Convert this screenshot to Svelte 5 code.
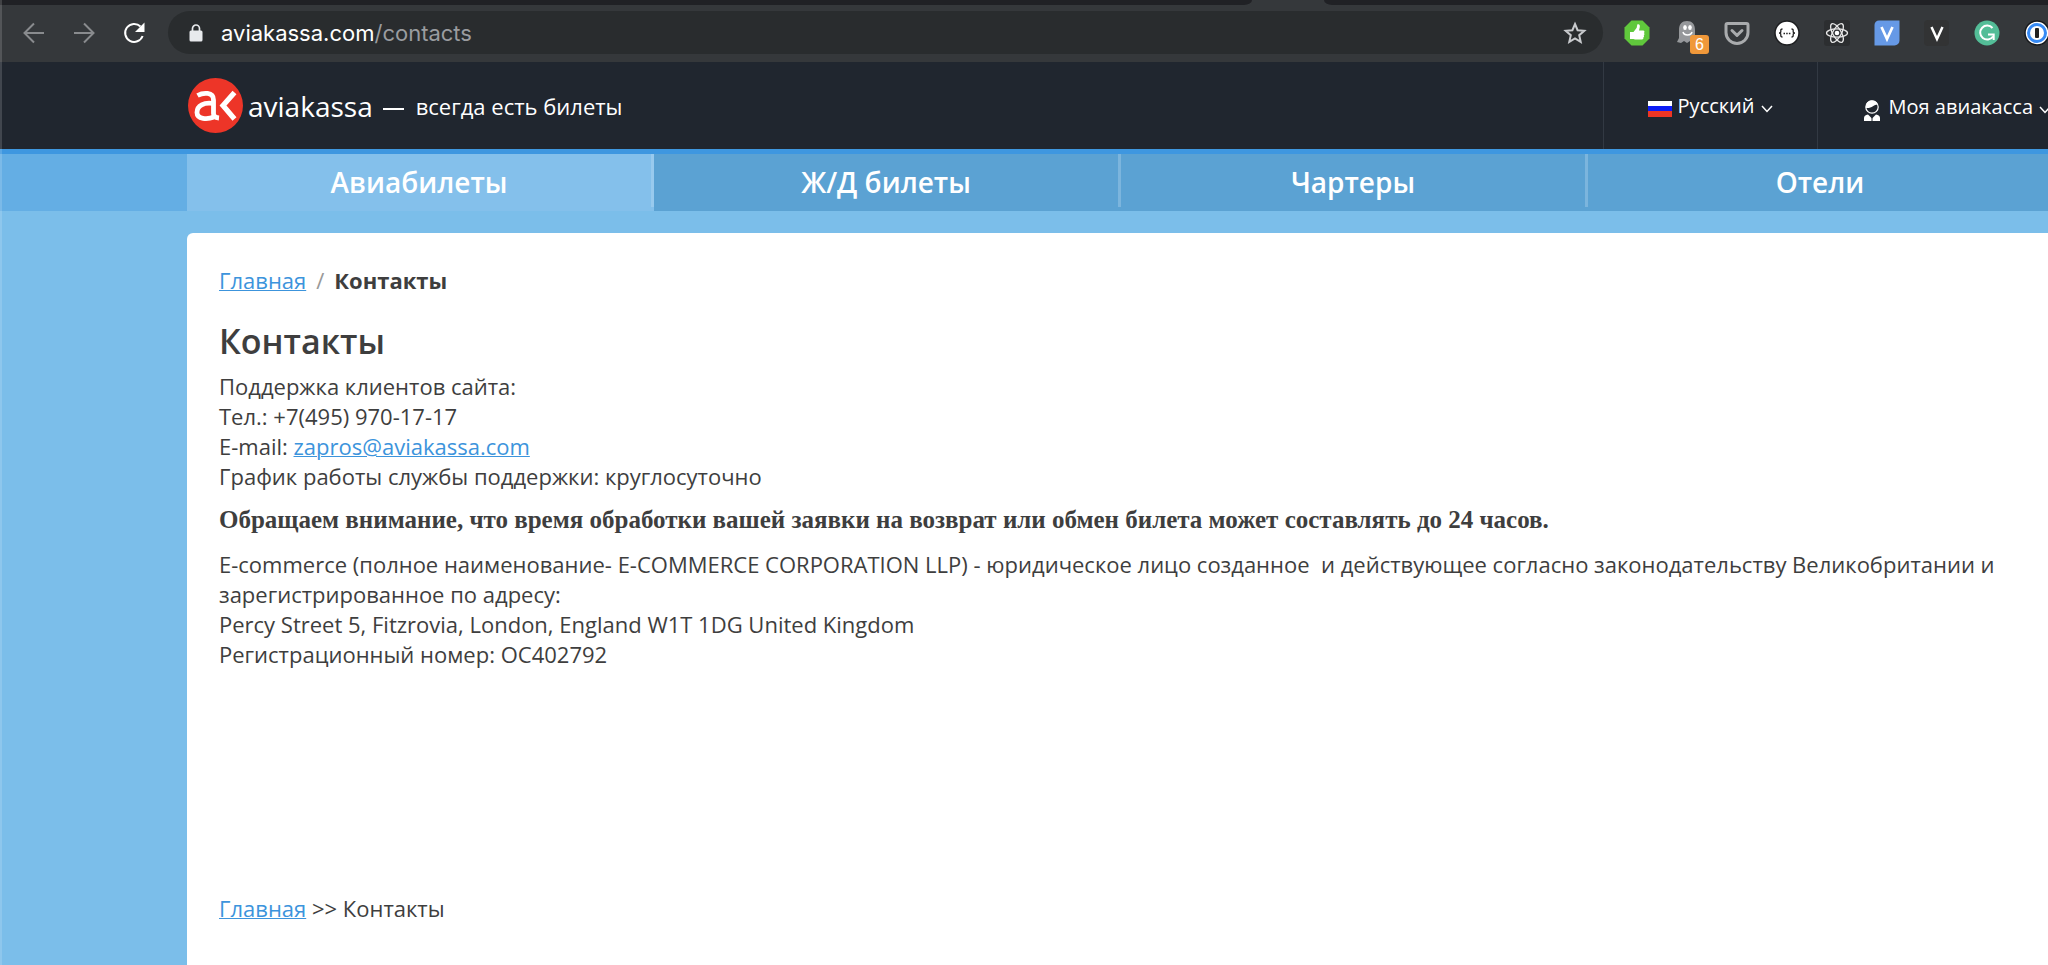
<script>
  const tabs = ['Авиабилеты', 'Ж/Д билеты', 'Чартеры', 'Отели'];
  const petals = [0, 60, 120];
</script>

<div class="page">
  <div class="tabstrip" aria-hidden="true">
    <span class="strip-left"></span>
    <span class="strip-right"></span>
  </div>

  <div class="toolbar">
    <div class="navigation">
      <button class="tool dim" aria-label="Back">
        <svg width="24" height="24" viewBox="0 0 24 24"><path d="M22 12H3M12 2.500 2.500 12 12 21.500" /></svg>
      </button>
      <button class="tool dim" aria-label="Forward">
        <svg width="24" height="24" viewBox="0 0 24 24"><path d="M2 12h19M12 2.500 21.500 12 12 21.500" /></svg>
      </button>
      <button class="tool bright" aria-label="Reload">
        <svg width="24" height="24" viewBox="0 0 24 24">
          <path d="M18.500 5.500A9 9 0 1 0 20.600 15" stroke-width="2.500" />
          <path class="solid" d="M22.500 1.500v9.500H13z" />
        </svg>
      </button>
    </div>

    <div class="omnibox">
      <svg class="lock" width="14" height="18" viewBox="0 0 14 18" aria-hidden="true">
        <rect x="0.500" y="6.500" width="13" height="11" rx="1.500" fill="#e8eaed" />
        <path d="M3.500 7V4.500a3.500 3.500 0 0 1 7 0V7" fill="none" stroke="#e8eaed" stroke-width="1.700" />
      </svg>
      <span class="url">aviakassa.com<span class="path">/contacts</span></span>
      <button class="tool star" aria-label="Bookmark">
        <svg width="24" height="24" viewBox="0 0 24 24">
          <path d="M12 3l2.600 6.200 6.700.6-5.100 4.400 1.500 6.600L12 17.300l-5.700 3.500 1.500-6.600-5.100-4.400 6.700-.6z" />
        </svg>
      </button>
    </div>

    <div class="extensions">
      <button class="tool" aria-label="Blocker">
        <svg width="26" height="26" viewBox="0 0 26 26">
          <path d="M7.500.500h11l7 7v11l-7 7h-11l-7-7v-11z" fill="#60c83c" />
          <path d="M6 12h3.500l3.200-4.300.6-3.200c1.800-.8 2.900.6 2.500 2.500L15 10.500h4c1.800 0 1.800 2 .8 2.500 1 .6.900 1.900-.1 2.300.7.700.5 1.900-.4 2.200.4.900-.1 2-1.300 2H11L9.500 19H6z" fill="#fff" />
        </svg>
      </button>
      <button class="tool ghost" aria-label="Ghost">
        <svg width="20" height="24" viewBox="0 0 20 24">
          <path d="M2 10C2 4 5 1 10 1s8 3 8 9v8l2 4-4 1-3-2-3 2-3-2-3 2-4-1 2-4z" fill="#96989b" />
          <ellipse cx="8" cy="7.500" rx="1.800" ry="2.500" fill="#fff" />
          <ellipse cx="13" cy="7.500" rx="1.800" ry="2.500" fill="#fff" />
          <path d="M6 12c1 4 8 4 9 0" fill="none" stroke="#fff" stroke-width="1.500" />
        </svg>
        <span class="badge">6</span>
      </button>
      <button class="tool" aria-label="Pocket">
        <svg width="26" height="26" viewBox="0 0 26 26" fill="none" stroke="#a9abad">
          <path d="M3.500 3.500h19q1.500 0 1.500 1.500v7.500a11 11 0 0 1-22 0V5q0-1.500 1.500-1.500z" stroke-width="3" />
          <path d="M8 10.500l5 4.800 5-4.800" stroke-width="3" stroke-linecap="round" stroke-linejoin="round" />
        </svg>
      </button>
      <button class="tool" aria-label="JSON">
        <svg width="26" height="26" viewBox="0 0 26 26">
          <circle cx="13" cy="13" r="12" fill="#fff" stroke="#1d1e20" stroke-width="1.500" />
          <path d="M8.500 9Q6.500 9 6.800 11T5 13q2 0 1.800 2t1.700 2M17.500 9q2 0 1.700 2t1.800 2q-2 0-1.800 2t-1.700 2" fill="none" stroke="#222" stroke-width="1.300" />
          <path d="M9.500 13.500h1.500m1.200 0h1.500m1.200 0h1.500" stroke="#222" stroke-width="1.500" />
        </svg>
      </button>
      <button class="tool" aria-label="React">
        <svg width="26" height="26" viewBox="0 0 26 26">
          <rect width="26" height="26" rx="3" fill="#2c2e30" />
          {#each petals as angle}
            <ellipse cx="13" cy="13" rx="10.500" ry="4.200" fill="none" stroke="#e6e6e6" stroke-width="1.300" transform="rotate({angle} 13 13)" />
          {/each}
          <circle cx="13" cy="13" r="2.300" fill="#fff" />
        </svg>
      </button>
      <button class="tool" aria-label="V blue">
        <svg width="26" height="26" viewBox="0 0 26 26">
          <path d="M5 .500h20.500v20a5 5 0 0 1-5 5H.500V5A4.500 4.500 0 0 1 5 .500z" fill="#6699e6" />
          <path d="M7.500 7 13 19l5.500-12" fill="none" stroke="#fff" stroke-width="2.700" />
        </svg>
      </button>
      <button class="tool" aria-label="V dark">
        <svg width="26" height="26" viewBox="0 0 26 26">
          <rect width="25" height="26" rx="4" fill="#323334" />
          <path d="M7.500 7 13 19l5.500-12" fill="none" stroke="#fff" stroke-width="2.500" />
        </svg>
      </button>
      <button class="tool" aria-label="Grammar">
        <svg width="26" height="26" viewBox="0 0 26 26">
          <circle cx="13" cy="13" r="12.500" fill="#53bd97" />
          <path d="M18.500 8A7 7 0 1 0 19 16.500M14 14.500h5.700v5.500" fill="none" stroke="#fff" stroke-width="2" />
        </svg>
      </button>
      <button class="tool" aria-label="Passwords">
        <svg width="26" height="26" viewBox="0 0 26 26">
          <circle cx="13" cy="13" r="12" fill="#fff" stroke="#17191c" stroke-width="1.500" />
          <circle cx="13" cy="13" r="8.500" fill="#fff" stroke="#368af5" stroke-width="3" />
          <rect x="11" y="8" width="4" height="10" rx="1" fill="#222" />
        </svg>
      </button>
    </div>
  </div>

  <header>
    <a class="brand" href="#home">
      <svg width="55" height="55" viewBox="0 0 55 55" aria-hidden="true">
        <circle cx="27.500" cy="27.500" r="27.500" fill="#ed3528" />
        <g fill="none" stroke="#fff">
          <path d="M9.500 17.500C15 14.500 25.500 13.500 25.500 22v13.500q0 4 5.500 4.500" stroke-width="4.800" />
          <path d="M25.500 25.500C16 24 9 27.500 9 34.500c0 7 10.500 7 17 4.500" stroke-width="4.800" />
          <path d="M46.500 14.500 35 27.500 46.500 41" stroke-width="5.200" />
        </g>
      </svg>
      <span class="name">aviakassa</span>
    </a>
    <span class="slogan"><span class="dash"></span>всегда есть билеты</span>
    <div class="menus">
      <button class="menu language">
        <svg width="24" height="16" viewBox="0 0 24 16" aria-hidden="true">
          <path fill="#fff" d="M0 0h24v6H0z" /><path fill="#0c1df5" d="M0 5h24v6H0z" /><path fill="#ee3524" d="M0 10h24v6H0z" />
        </svg>
        <span>Русский</span>
        <svg class="chevron" width="12" height="8" viewBox="0 0 12 8" aria-hidden="true"><path d="M1 1l5 5.500L11 1" /></svg>
      </button>
      <button class="menu account">
        <svg width="16" height="21" viewBox="0 0 16 21" aria-hidden="true">
          <circle cx="8" cy="7" r="6.200" fill="none" stroke="#fff" stroke-width="1.200" />
          <path d="M2 7C2 2 5 .500 8 .500s5 1 5.500 4C10 4.500 8 8.500 2 8zM0 21v-3q0-3 4-3.500l4 4 4-4q4 .5 4 3.500v3z" fill="#fff" />
          <path d="M8 16v5" stroke="#20262f" stroke-width="1" />
        </svg>
        <span>Моя авиакасса</span>
        <svg class="chevron" width="12" height="8" viewBox="0 0 12 8" aria-hidden="true"><path d="M1 1l5 5.500L11 1" /></svg>
      </button>
    </div>
  </header>

  <nav>
    {#each tabs as tab, i}
      <a href="#tab{i}" class:active={i === 0}>{tab}</a>
    {/each}
  </nav>

  <main>
    <div class="crumbs">
      <a href="#home">Главная</a><span class="slash">/</span><strong>Контакты</strong>
    </div>
    <h1>Контакты</h1>
    <p>
      Поддержка клиентов сайта:<br />
      Тел.: +7(495) 970-17-17<br />
      E-mail: <a href="mailto:zapros@aviakassa.com">zapros@aviakassa.com</a><br />
      График работы службы поддержки: круглосуточно
    </p>
    <p class="notice">Обращаем внимание, что время обработки вашей заявки на возврат или обмен билета может составлять до 24 часов.</p>
    <p>
      E-commerce (полное наименование- E-COMMERCE CORPORATION LLP) - юридическое лицо созданное&nbsp; и действующее согласно законодательству Великобритании и зарегистрированное по адресу:<br />
      Percy Street 5, Fitzrovia, London, England W1T 1DG United Kingdom<br />
      Регистрационный номер: OC402792
    </p>
    <div class="trail"><a href="#home">Главная</a> &gt;&gt; Контакты</div>
  </main>
</div>

<style>
  :global(body) {
    margin: 0;
    background: #7bbeea;
  }
  .page {
    display: flex;
    position: relative;
    flex-direction: column;
    min-height: 100vh;
    overflow: hidden;
    font-family: 'Open Sans', sans-serif;
    font-size: 22px;
    line-height: 30px;
    color: #3e3e3e;
  }
  /* window edge highlight */
  .page::before {
    content: '';
    position: absolute;
    inset: 0 auto 0 0;
    width: 2px;
    background: rgba(255, 255, 255, 0.15);
  }
  button {
    padding: 0;
    border: 0;
    background: none;
    font: inherit;
    color: inherit;
  }
  svg {
    display: block;
    flex: none;
  }
  .tabstrip {
    display: flex;
    gap: 72px;
    height: 5px;
    background: #35383b;
  }
  .strip-left,
  .strip-right {
    background: #202125;
  }
  .strip-left {
    flex: 1252;
    border-bottom-right-radius: 8px 5px;
  }
  .strip-right {
    flex: 724;
    border-bottom-left-radius: 8px 5px;
  }
  .toolbar {
    display: flex;
    align-items: center;
    height: 57px;
    padding: 0 0 2px 22px;
    box-sizing: border-box;
    background: #35383b;
  }
  .navigation {
    display: flex;
    gap: 26px;
    margin-right: 22px;
  }
  .tool {
    display: flex;
    position: relative;
  }
  .navigation path {
    fill: none;
    stroke: currentColor;
    stroke-width: 2;
  }
  .navigation .solid {
    fill: currentColor;
    stroke: none;
  }
  .dim {
    color: #898b8e;
  }
  .bright {
    color: #fff;
  }
  .omnibox {
    display: flex;
    flex: 1;
    align-items: center;
    height: 43px;
    padding: 0 16px 0 21px;
    box-sizing: border-box;
    border-radius: 22px;
    background: #292c2e;
  }
  .url {
    flex: 1;
    margin-left: 18px;
    font-family: Inter, sans-serif;
    font-size: 22px;
    color: #fff;
  }
  .path {
    color: #9a9ca0;
  }
  .star path {
    fill: none;
    stroke: #c8cacd;
    stroke-width: 2;
  }
  .extensions {
    display: flex;
    gap: 24px;
    margin: 0 -2px 0 21px;
  }
  .ghost {
    width: 26px;
    padding-left: 3px;
    box-sizing: border-box;
  }
  .badge {
    position: absolute;
    left: 16px;
    top: 15px;
    width: 19px;
    height: 19px;
    border-radius: 3px;
    background: #f0983a;
    color: #fff;
    font: 16px/20px 'Liberation Sans', sans-serif;
  }
  header {
    display: flex;
    align-items: center;
    height: 87px;
    padding-left: 188px;
    background: #20262f;
    color: #fff;
  }
  .brand {
    display: flex;
    align-items: center;
    gap: 5px;
    color: #fff;
    text-decoration: none;
  }
  .name {
    font-size: 28px;
    font-weight: 500;
  }
  .slogan {
    display: flex;
    flex: 1;
    align-items: center;
    gap: 12px;
    margin-left: 10px;
  }
  .dash {
    width: 21px;
    height: 2px;
    margin-top: 6px;
    background: #fff;
  }
  .menus {
    display: flex;
    align-self: stretch;
    margin-right: -4px;
  }
  .menu {
    display: flex;
    align-items: center;
    gap: 6px;
    border-left: 1px solid #323943;
    font-size: 20px;
    white-space: nowrap;
  }
  .menu svg {
    margin-top: 6px;
  }
  .language {
    padding: 0 44px;
  }
  .account {
    padding: 3px 1px 0 46px;
  }
  .account span {
    margin-left: 3px;
  }
  .chevron path {
    fill: none;
    stroke: #fff;
    stroke-width: 1.5;
  }
  nav {
    display: grid;
    grid-template-columns: repeat(4, 1fr);
    height: 57px;
    padding-left: 187px;
    margin-right: -7px;
    border-top: 5px solid #3e97e0;
    background: #64aee4;
  }
  nav a {
    display: flex;
    align-items: center;
    justify-content: center;
    padding: 0 3px 2px 0;
    background: linear-gradient(#7cb5dd, #7cb5dd) right top / 3px 53px no-repeat #5ba2d3;
    color: #fff;
    font-size: 28px;
    font-weight: 600;
    text-decoration: none;
  }
  nav .active {
    background: linear-gradient(#98caee, #98caee) right top / 3px 53px no-repeat #84c0eb;
  }
  main {
    flex: 1;
    margin: 22px -3px 0 187px;
    padding: 32px 32px 40px;
    border-top-left-radius: 6px;
    background: #fff;
  }
  main a {
    color: #3c94dc;
    text-decoration-thickness: 1px;
  }
  .slash {
    margin: 0 10px;
    color: #999;
  }
  h1 {
    margin: 23px 0 7px;
    font-size: 34px;
    font-weight: 600;
    line-height: 46px;
  }
  p {
    margin: 0 0 14px;
  }
  .notice {
    font-family: 'Liberation Serif', serif;
    font-size: 25px;
    font-weight: 700;
  }
  .trail {
    margin-top: 224px;
  }
</style>
